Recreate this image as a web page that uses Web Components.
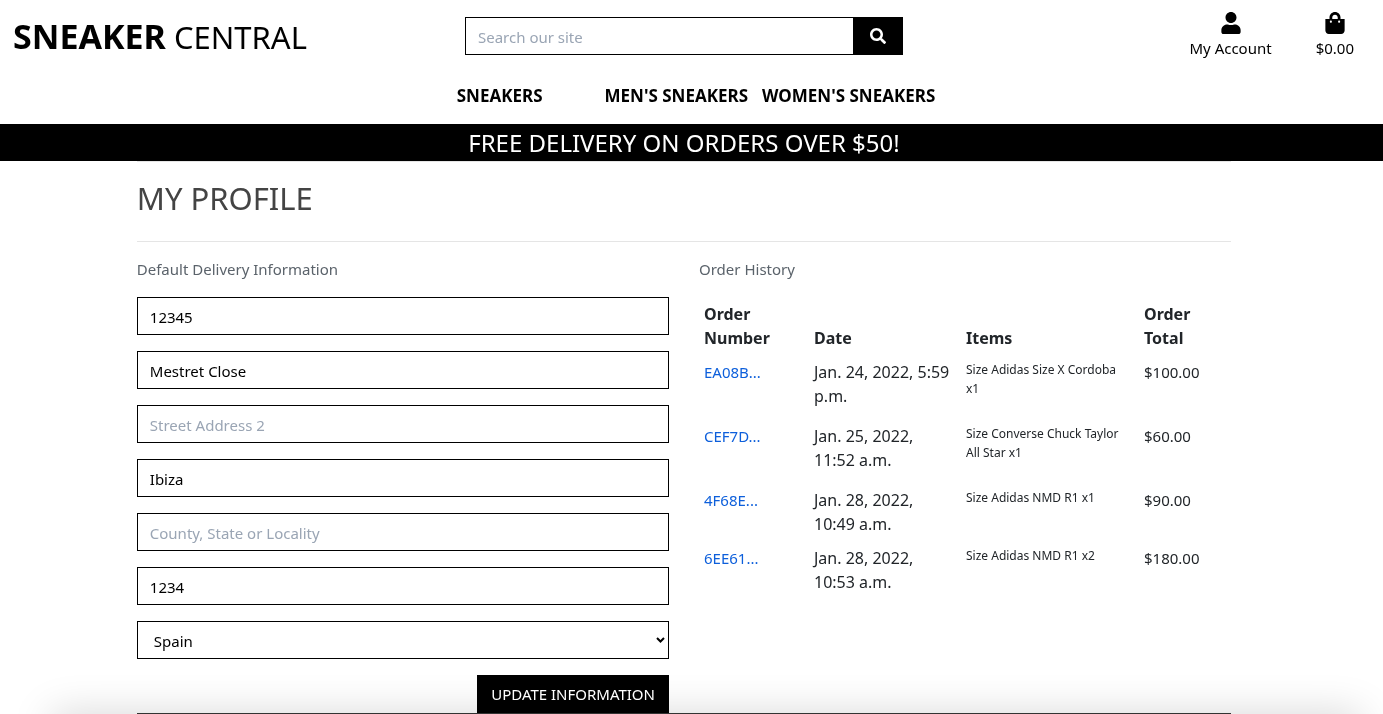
<!DOCTYPE html>
<html lang="en">
<head>
<meta charset="utf-8">
<meta name="viewport" content="width=device-width, initial-scale=1">
<title>My Profile | Sneaker Central</title>
<style>
  :root {
    --ink: #000;
    --body: #212529;
    --muted: #6c757d;
    --gutter: 15px;
  }
  body {
    margin: 0;
    background: #fff;
    color: #000;
    font: 15px/24px "Noto Sans", sans-serif;
  }
</style>
</head>
<body>
<sneaker-page></sneaker-page>

<script>
const define = (name, html, setup) => {
  const template = document.createElement('template');
  template.innerHTML = '<style>*,*::before,*::after{box-sizing:border-box}</style>' + html;
  customElements.define(name, class extends HTMLElement {
    constructor() {
      super();
      this.attachShadow({ mode: 'open' }).append(template.content.cloneNode(true));
    }
    connectedCallback() { if (setup) setup(this, this.shadowRoot); }
  });
};

/* Search form */
define('site-search', `
  <style>
    :host { display: block; }
    form { display: flex; height: 38px; }
    input {
      flex: 1; min-width: 0; padding: 2px 12px 0; border: 1px solid #000; border-right: 0;
      border-radius: 0; font: inherit; color: #000; background: #fff;
    }
    input::placeholder { color: #9aa5b4; }
    button {
      width: 50px; padding: 0; border: 1px solid #000; background: #000; color: #fff;
      display: grid; place-items: center;
    }
    svg { width: 16px; height: 16px; fill: currentColor; display: block; }
  </style>
  <form role="search">
    <input type="text" placeholder="Search our site" aria-label="Search our site">
    <button type="button" aria-label="Search">
      <svg viewBox="0 0 512 512"><path d="M505 442.7L405.3 343c-4.500-4.500-10.600-7-17-7H372c27.600-35.300 44-79.700 44-128C416 93.100 322.900 0 208 0S0 93.100 0 208s93.100 208 208 208c48.300 0 92.700-16.400 128-44v16.300c0 6.400 2.500 12.500 7 17l99.700 99.700c9.400 9.400 24.600 9.400 33.900 0l28.300-28.300c9.400-9.400 9.400-24.600.1-34zM208 336c-70.700 0-128-57.200-128-128 0-70.700 57.200-128 128-128 70.700 0 128 57.200 128 128 0 70.700-57.200 128-128 128z"/></svg>
    </button>
  </form>`);

/* Header link: icon above a caption */
define('icon-link', `
  <style>
    :host { display: block; }
    a { display: flex; flex-direction: column; align-items: center; gap: 2px; color: inherit; text-decoration: none; }
    ::slotted(svg) { height: 22px; width: 20px; fill: #000; display: block; }
  </style>
  <a href="#"><slot name="icon"></slot><span><slot></slot></span></a>`);

define('site-header', `
  <style>
    :host { display: block; padding-right: var(--gutter); }
    .top { display: grid; grid-template-columns: repeat(3, 1fr); padding-top: 12px; }
    .logo { padding: 0 0 0 13px; font-size: 31px; line-height: 48px; color: #000; text-decoration: none; white-space: nowrap; }
    .logo strong { font-size: 34px; }
    site-search { padding: 5px 9px 0; }
    .actions { display: flex; justify-content: flex-end; gap: 44px; padding-right: 14px; }
    nav { padding: 23px 0 16px 24px; }
    ul { list-style: none; margin: 0; padding: 0; display: flex; justify-content: center; gap: 14px; }
    li:first-child { margin-right: 48px; }
    nav a { color: #000; font-size: 17px; text-decoration: none; font-weight: 700; text-transform: uppercase; white-space: nowrap; }
  </style>
  <header>
    <div class="top">
      <a class="logo" href="#"><strong>SNEAKER</strong> CENTRAL</a>
      <site-search></site-search>
      <div class="actions">
        <icon-link>
          <svg slot="icon" viewBox="0 0 448 512"><path d="M224 256c70.700 0 128-57.300 128-128S294.700 0 224 0 96 57.300 96 128s57.300 128 128 128zm89.600 32h-16.700c-22.200 10.200-46.900 16-72.900 16s-50.600-5.800-72.900-16h-16.700C60.200 288 0 348.200 0 422.400V464c0 26.500 21.500 48 48 48h352c26.500 0 48-21.500 48-48v-41.600c0-74.200-60.200-134.400-134.400-134.400z"/></svg>
          My Account
        </icon-link>
        <icon-link>
          <svg slot="icon" viewBox="0 0 448 512"><path d="M352 160v-32C352 57.420 294.579 0 224 0 153.420 0 96 57.420 96 128v32H0v272c0 44.183 35.817 80 80 80h288c44.183 0 80-35.817 80-80V160h-96zm-192-32c0-35.290 28.710-64 64-64s64 28.710 64 64v32H160v-32zm160 120c-13.255 0-24-10.745-24-24s10.745-24 24-24 24 10.745 24 24-10.745 24-24 24zm-192 0c-13.255 0-24-10.745-24-24s10.745-24 24-24 24 10.745 24 24-10.745 24-24 24z"/></svg>
          $0.00
        </icon-link>
      </div>
    </div>
    <nav aria-label="Main">
      <ul>
        <li><a href="#">Sneakers</a></li>
        <li><a href="#">Men's Sneakers</a></li>
        <li><a href="#">Women's Sneakers</a></li>
      </ul>
    </nav>
  </header>`);

define('promo-banner', `
  <style>
    :host { display: block; background: #000; color: #fff; padding-right: var(--gutter); text-align: center; }
    p { margin: 0; font-size: 24px; line-height: 37px; }
  </style>
  <p><slot></slot></p>`);

/* One bordered text field */
define('text-field', `
  <style>
    :host { display: block; }
    input {
      display: block; width: 100%; height: 38px; padding: 2px 12px 0; border: 1px solid #000;
      border-radius: 0; background: #fff; color: #000; font: inherit;
    }
    input::placeholder { color: #9aa5b4; }
  </style>
  <input type="text">`,
  (host, root) => {
    const input = root.querySelector('input');
    input.placeholder = host.getAttribute('label');
    input.setAttribute('aria-label', host.getAttribute('label'));
    input.value = host.getAttribute('value') || '';
  });

define('delivery-form', `
  <style>
    :host { display: block; }
    form { display: grid; gap: 16px; }
    .select { display: grid; align-items: center; }
    select {
      grid-area: 1 / 1; width: 100%; height: 38px; padding: 2px 16px 0; border: 1px solid #000; border-radius: 0;
      background: #fff; color: #000; font: inherit; appearance: none;
    }
    svg { grid-area: 1 / 1; justify-self: end; width: 9px; height: 6px; margin-right: 4px; pointer-events: none; }
    button {
      justify-self: end; height: 38px; padding: 0 14px; border: 0; border-radius: 0;
      background: #000; color: #fff; font: inherit; text-transform: uppercase;
    }
  </style>
  <form>
    <text-field label="Phone Number" value="12345"></text-field>
    <text-field label="Street Address 1" value="Mestret Close"></text-field>
    <text-field label="Street Address 2"></text-field>
    <text-field label="Town or City" value="Ibiza"></text-field>
    <text-field label="County, State or Locality"></text-field>
    <text-field label="Postal Code" value="1234"></text-field>
    <div class="select">
      <select aria-label="Country"><option>Spain</option></select>
      <svg viewBox="0 0 9 6" aria-hidden="true"><path d="M1 1l3.500 3.500L8 1" fill="none" stroke="#000" stroke-width="2"/></svg>
    </div>
    <button type="button">Update Information</button>
  </form>`);

const orders = [
  ['EA08B...', 'Jan. 24, 2022, 5:59 p.m.', 'Size Adidas Size X Cordoba x1', '$100.00'],
  ['CEF7D...', 'Jan. 25, 2022, 11:52 a.m.', 'Size Converse Chuck Taylor All Star x1', '$60.00'],
  ['4F68E...', 'Jan. 28, 2022, 10:49 a.m.', 'Size Adidas NMD R1 x1', '$90.00'],
  ['6EE61...', 'Jan. 28, 2022, 10:53 a.m.', 'Size Adidas NMD R1 x2', '$180.00'],
];

define('order-history', `
  <style>
    :host { display: block; color: var(--body); }
    table { width: 100%; table-layout: fixed; border-collapse: collapse; }
    th, td { padding: 5px; text-align: left; vertical-align: top; }
    th { vertical-align: bottom; font-size: 16px; }
    td:nth-child(2) { font-size: 16px; }
    td:nth-child(3) { padding-right: 16px; }
    .number { width: 110px; }
    .items { width: 178px; }
    .date { width: 152px; }
    a { color: #0d5fdb; text-decoration: none; }
    ul { list-style: none; margin: 0 0 16px; padding: 0; font-size: 12px; line-height: 19px; }
  </style>
  <table>
    <thead><tr>
      <th class="number">Order Number</th><th class="date">Date</th><th class="items">Items</th><th>Order Total</th>
    </tr></thead>
    <tbody></tbody>
  </table>`,
  (host, root) => {
    root.querySelector('tbody').innerHTML = orders.map(([number, date, item, total]) =>
      `<tr><td><a href="#">${number}</a></td><td>${date}</td><td><ul><li>${item}</li></ul></td><td>${total}</td></tr>`).join('');
  });

define('profile-page', `
  <style>
    :host { display: block; padding-right: var(--gutter); }
    main { margin: 0 10%; }
    hr { margin: 0; border: 0; border-top: 1px solid #e5e5e5; }
    h1 { margin: 0; padding: 12px 0 19px; font-size: 31px; line-height: 48px; font-weight: 400; color: #444; text-transform: uppercase; }
    .columns { display: grid; grid-template-columns: 1fr 1fr; gap: 30px; padding-top: 15px; }
    h2 { margin: 0 0 16px; font-size: inherit; line-height: 24px; font-weight: 400; color: #5b636b; }
    footer { border-top: 1px solid #333; }
  </style>
  <main>
    <hr>
    <h1>My Profile</h1>
    <hr>
    <div class="columns">
      <section><h2>Default Delivery Information</h2><delivery-form></delivery-form></section>
      <section><h2>Order History</h2><order-history></order-history></section>
    </div>
    <footer></footer>
  </main>`);

/* Soft shade along the lower window edge */
define('edge-shade', `
  <style>
    :host {
      position: fixed; left: 60px; right: 30px; bottom: -20px; height: 20px;
      box-shadow: 0 8px 40px 8px rgba(0, 0, 0, .17); pointer-events: none;
      z-index: -1;
    }
  </style>`);

define('sneaker-page', `
  <style>:host { display: block; }</style>
  <site-header></site-header>
  <promo-banner>FREE DELIVERY ON ORDERS OVER $50!</promo-banner>
  <profile-page></profile-page>
  <edge-shade></edge-shade>`);
</script>
</body>
</html>
